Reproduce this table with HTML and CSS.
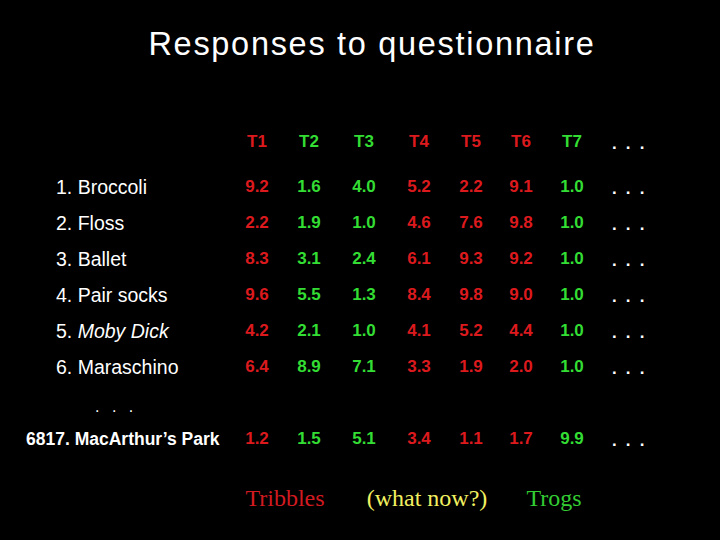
FILE: index.html
```html
<!DOCTYPE html>
<html>
<head>
<meta charset="utf-8">
<link rel="stylesheet" href="styles.css">
</head>
<body>
<div class="slide">
  <h1 class="title">Responses to questionnaire</h1>
  <div class="table">
    <div class="row head">
      <div class="label"></div>
      <div class="n r">T1</div><div class="n g">T2</div><div class="n g">T3</div><div class="n r">T4</div><div class="n r">T5</div><div class="n r">T6</div><div class="n g">T7</div><div class="dots">. . .</div>
    </div>
    <div class="row first">
      <div class="label">1. Broccoli</div>
      <div class="n r">9.2</div><div class="n g">1.6</div><div class="n g">4.0</div><div class="n r">5.2</div><div class="n r">2.2</div><div class="n r">9.1</div><div class="n g">1.0</div><div class="dots">. . .</div>
    </div>
    <div class="row">
      <div class="label">2. Floss</div>
      <div class="n r">2.2</div><div class="n g">1.9</div><div class="n g">1.0</div><div class="n r">4.6</div><div class="n r">7.6</div><div class="n r">9.8</div><div class="n g">1.0</div><div class="dots">. . .</div>
    </div>
    <div class="row">
      <div class="label">3. Ballet</div>
      <div class="n r">8.3</div><div class="n g">3.1</div><div class="n g">2.4</div><div class="n r">6.1</div><div class="n r">9.3</div><div class="n r">9.2</div><div class="n g">1.0</div><div class="dots">. . .</div>
    </div>
    <div class="row">
      <div class="label">4. Pair socks</div>
      <div class="n r">9.6</div><div class="n g">5.5</div><div class="n g">1.3</div><div class="n r">8.4</div><div class="n r">9.8</div><div class="n r">9.0</div><div class="n g">1.0</div><div class="dots">. . .</div>
    </div>
    <div class="row">
      <div class="label">5. <i>Moby Dick</i></div>
      <div class="n r">4.2</div><div class="n g">2.1</div><div class="n g">1.0</div><div class="n r">4.1</div><div class="n r">5.2</div><div class="n r">4.4</div><div class="n g">1.0</div><div class="dots">. . .</div>
    </div>
    <div class="row">
      <div class="label">6. Maraschino</div>
      <div class="n r">6.4</div><div class="n g">8.9</div><div class="n g">7.1</div><div class="n r">3.3</div><div class="n r">1.9</div><div class="n r">2.0</div><div class="n g">1.0</div><div class="dots">. . .</div>
    </div>
    <div class="row gap">
      <div class="label small-dots">. . .</div>
    </div>
    <div class="row last">
      <div class="label bold">6817. MacArthur’s Park</div>
      <div class="n r">1.2</div><div class="n g">1.5</div><div class="n g">5.1</div><div class="n r">3.4</div><div class="n r">1.1</div><div class="n r">1.7</div><div class="n g">9.9</div><div class="dots">. . .</div>
    </div>
  </div>
  <div class="legend">
    <span class="leg red">Tribbles</span>
    <span class="leg yellow">(what now?)</span>
    <span class="leg green">Trogs</span>
  </div>
</div>
</body>
</html>
```

FILE: styles.css
```css
html, body {
  margin: 0;
  padding: 0;
  background: #000;
}
.slide {
  width: 720px;
  height: 540px;
  background: #000;
  color: #fff;
  font-family: "Liberation Sans", Arial, sans-serif;
  overflow: hidden;
}
.title {
  margin: 0;
  padding: 26px 0 0 24px;
  font-size: 32.5px;
  font-weight: normal;
  line-height: 37px;
  letter-spacing: 1.7px;
  text-align: center;
}
.table {
  margin-top: 61px;
}
.row {
  display: grid;
  grid-template-columns: 232px 50px 54px 56px 54px 50px 50px 52px 64px;
  height: 36px;
  align-items: center;
}
.row.first {
  margin-top: 9px;
}
.label {
  padding-left: 56px;
  font-size: 19.5px;
  white-space: nowrap;
}
.label.bold {
  padding-left: 26px;
  font-weight: bold;
  font-size: 17.5px;
}
.small-dots {
  padding-left: 95px;
  font-size: 16px;
  letter-spacing: 4px;
  padding-top: 8px;
}
.n {
  text-align: center;
  font-weight: bold;
  font-size: 17px;
}
.r { color: #dc1a1e; }
.g { color: #33dd33; }
.dots {
  text-align: left;
  padding-left: 14px;
  font-weight: bold;
  font-size: 17px;
  letter-spacing: 2.2px;
  padding-top: 3px;
}
.legend {
  display: grid;
  grid-template-columns: 232px 106px 178px 76px;
  margin-top: 28px;
  font-family: "Liberation Serif", "Times New Roman", serif;
  font-size: 24px;
}
.leg {
  text-align: center;
}
.leg.red { grid-column: 2; color: #d21a20; }
.leg.yellow { grid-column: 3; color: #f2f060; }
.leg.green { grid-column: 4; color: #33cc33; }
```
